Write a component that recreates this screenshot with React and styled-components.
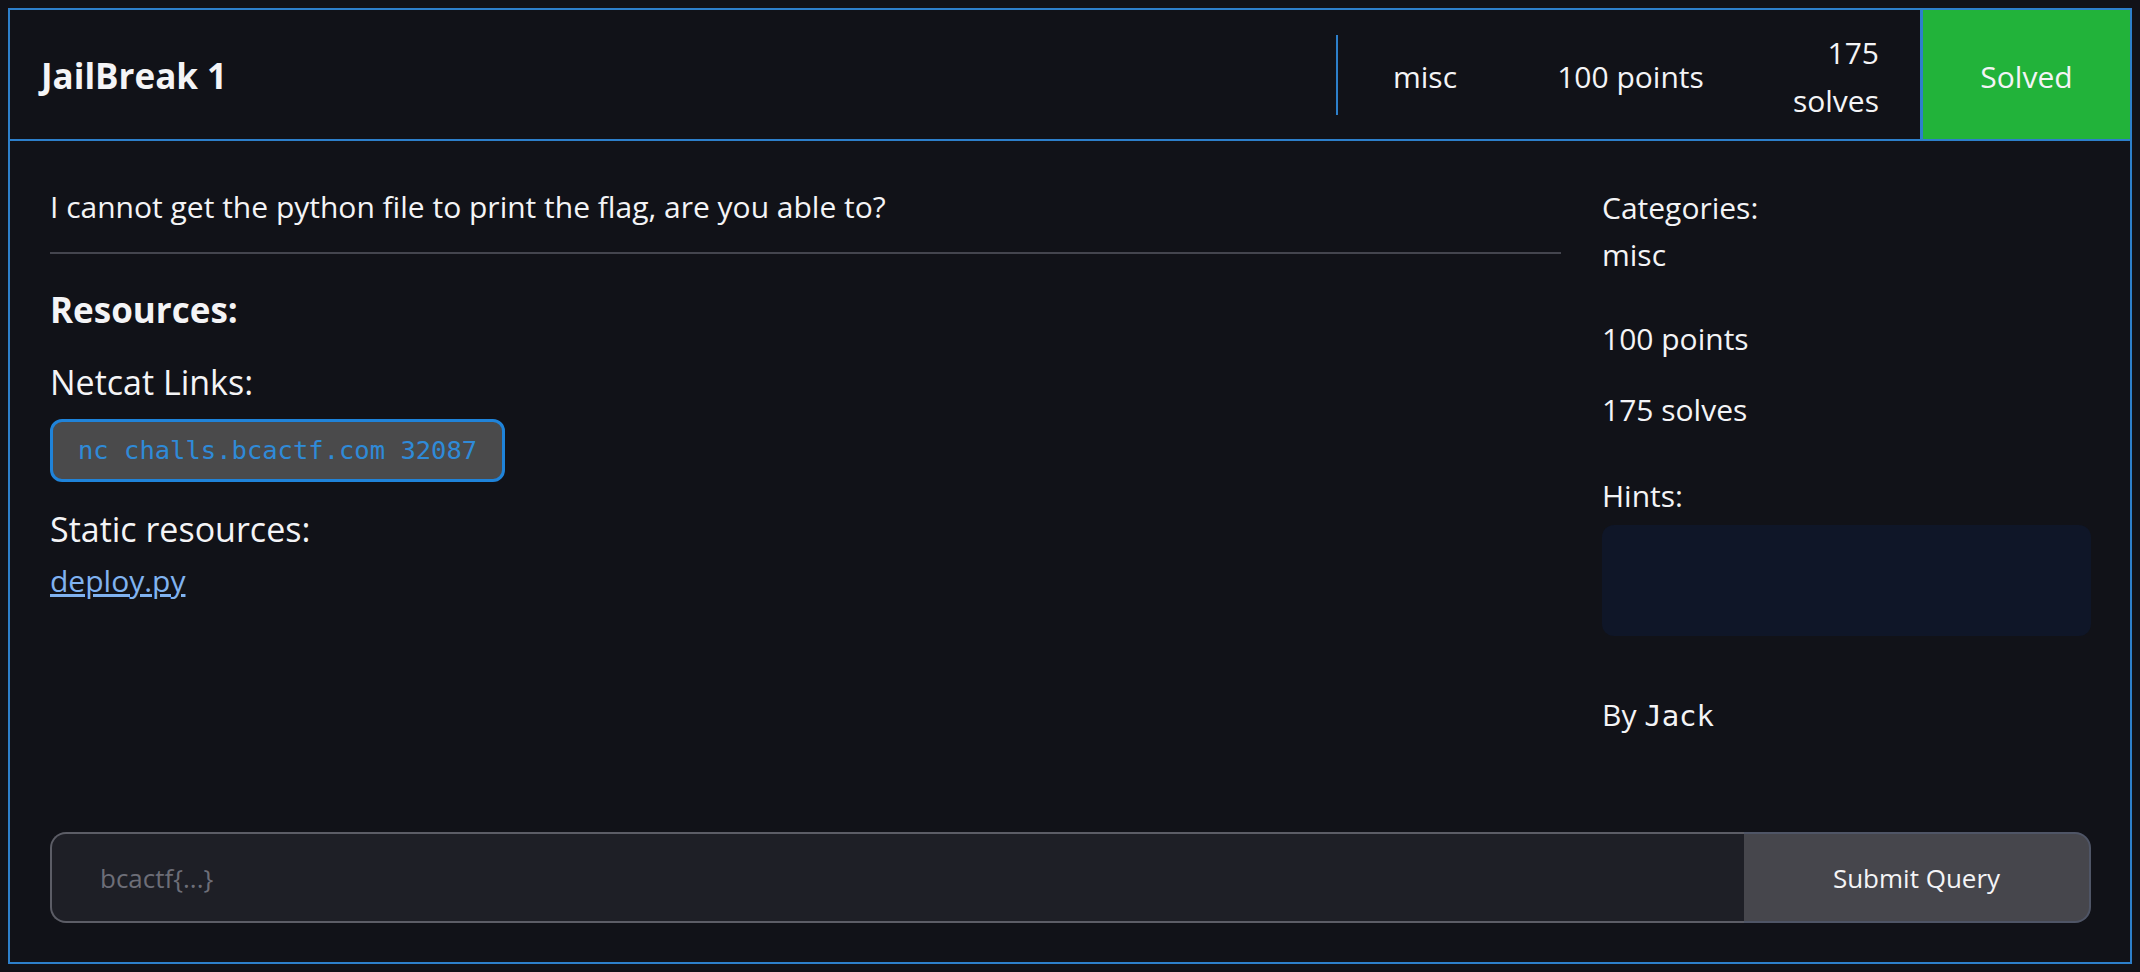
import React from 'react';
import styled, { createGlobalStyle } from 'styled-components';

const GlobalStyle = createGlobalStyle`
    html, body {
        background: #111218;
    }
    body {
        margin: 8px;
        font-family: "Open Sans", "Noto Sans", sans-serif;
        color: #f4f4f6;
    }
    * {
        box-sizing: border-box;
    }
`;

const BLUE = '#2d7fca';

const Card = styled.div`
    height: calc(100vh - 16px);
    border: 2px solid ${BLUE};
    display: flex;
    flex-direction: column;
`;

const Header = styled.header`
    display: flex;
    align-items: center;
    height: 131px;
    padding-top: 4px;
    border-bottom: 2px solid ${BLUE};
`;

const Title = styled.h1`
    margin: 0;
    padding-left: 31px;
    font-size: 35px;
    font-weight: 700;
    line-height: 1.5;
`;

const Stats = styled.div`
    margin-left: auto;
    display: flex;
    align-items: center;
`;

const Divider = styled.div`
    width: 2px;
    height: 80px;
    margin-top: -4px;
    background: ${BLUE};
`;

const Stat = styled.div`
    width: ${(p) => p.$w};
    padding-right: ${(p) => p.$pr || '0px'};
    text-align: ${(p) => p.$align || 'center'};
    font-size: 30px;
    line-height: 1.6;
`;

const SolvedBadge = styled.div`
    align-self: stretch;
    width: 210px;
    margin-top: -4px;
    padding-top: 4px;
    border-left: 3px solid ${BLUE};
    background: #22b33a;
    display: flex;
    align-items: center;
    justify-content: center;
    font-size: 30px;
`;

const Body = styled.div`
    flex: 1;
    display: flex;
    gap: 41px;
    padding: 43px 39px 0 40px;
`;

const Main = styled.div`
    flex: 1;
    display: flex;
    flex-direction: column;
    align-items: flex-start;
`;

const Text = styled.p`
    margin: ${(p) => p.$m || '0'};
    font-size: 30px;
    line-height: 1.5;
`;

const Rule = styled.hr`
    align-self: stretch;
    margin: 23px 0 0;
    border: none;
    height: 2px;
    background: #44454e;
`;

const SectionTitle = styled.h2`
    margin: 30px 0 0;
    font-size: 35px;
    font-weight: 700;
    line-height: 1.5;
`;

const Label = styled.h3`
    margin: ${(p) => p.$m || '0'};
    font-size: 34px;
    font-weight: 400;
    line-height: 1.5;
`;

const CodeBox = styled.code`
    margin-top: 11px;
    padding: 11px 25px;
    border: 3px solid #1f83d9;
    border-radius: 12px;
    background: #4a4a4b;
    color: #2f8ad8;
    font-family: "DejaVu Sans Mono", "Liberation Mono", monospace;
    font-size: 25.5px;
    line-height: 1.4;
`;

const FileLink = styled.a`
    margin-top: 3px;
    font-size: 30px;
    line-height: 1.5;
    color: #80b2f0;
    text-decoration: underline;
`;

const Side = styled.aside`
    width: 489px;
    display: flex;
    flex-direction: column;
`;

const HintsBox = styled.div`
    margin-top: 7px;
    height: 111px;
    border-radius: 12px;
    background: #0f1628;
`;

const Mono = styled.code`
    font-family: "DejaVu Sans Mono", "Liberation Mono", monospace;
    font-size: 29px;
`;

const FlagForm = styled.form`
    display: flex;
    height: 91px;
    margin: 0 39px 39px 40px;
`;

const FlagInput = styled.input`
    flex: 1;
    min-width: 0;
    padding: 0 0 0 48px;
    border: 2px solid #5c5d66;
    border-right: none;
    border-radius: 16px 0 0 16px;
    background: #1e1f26;
    color: #f4f4f6;
    font-family: inherit;
    font-size: 26px;
    outline: none;
    &::placeholder {
        color: #6d6e78;
    }
`;

const SubmitButton = styled.button`
    width: 347px;
    border: 2px solid #4f5566;
    border-left: none;
    border-radius: 0 16px 16px 0;
    background: #46464c;
    color: #f4f4f6;
    font-family: inherit;
    font-size: 26px;
    cursor: pointer;
`;

const App = () => (
    <>
        <GlobalStyle />
        <Card>
            <Header>
                <Title>JailBreak 1</Title>
                <Stats>
                    <Divider />
                    <Stat $w="174px">misc</Stat>
                    <Stat $w="237px">100 points</Stat>
                    <Stat $w="171px" $pr="41px" $align="right">175 solves</Stat>
                </Stats>
                <SolvedBadge>Solved</SolvedBadge>
            </Header>
            <Body>
                <Main>
                    <Text>I cannot get the python file to print the flag, are you able to?</Text>
                    <Rule />
                    <SectionTitle>Resources:</SectionTitle>
                    <Label $m="20px 0 0">Netcat Links:</Label>
                    <CodeBox>nc challs.bcactf.com 32087</CodeBox>
                    <Label $m="22px 0 0">Static resources:</Label>
                    <FileLink href="#">deploy.py</FileLink>
                </Main>
                <Side>
                    <Text $m="1px 0 0">Categories:</Text>
                    <Text $m="2px 0 0">misc</Text>
                    <Text $m="39px 0 0">100 points</Text>
                    <Text $m="26px 0 0">175 solves</Text>
                    <Text $m="41px 0 0">Hints:</Text>
                    <HintsBox />
                    <Text $m="56px 0 0">By <Mono>Jack</Mono></Text>
                </Side>
            </Body>
            <FlagForm onSubmit={(e) => e.preventDefault()}>
                <FlagInput type="text" placeholder="bcactf{...}" />
                <SubmitButton type="submit">Submit Query</SubmitButton>
            </FlagForm>
        </Card>
    </>
);

export default App;
